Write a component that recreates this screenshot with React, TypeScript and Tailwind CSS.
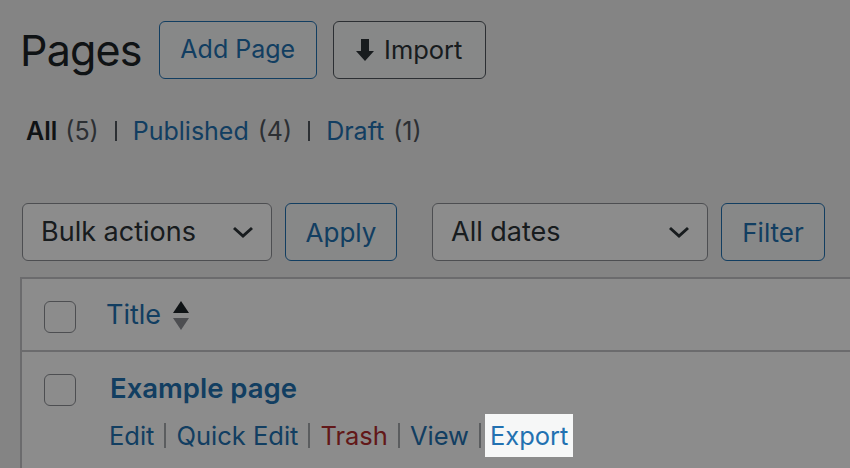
import React from "react";

const font = { fontFamily: "Inter, 'Noto Sans', sans-serif" };

function Chevron() {
  return (
    <svg width="22" height="14" viewBox="0 0 22 14" className="shrink-0">
      <path d="M2 3 L11 11 L20 3" fill="none" stroke="#2c3338" strokeWidth="3" />
    </svg>
  );
}

function Select({ label, width }: { label: string; width: string }) {
  return (
    <div
      className={`${width} h-[58px] flex items-center justify-between pl-[18px] pr-[17px] bg-white border-[1.5px] border-[#8c8f94] rounded-[6px] text-[27px] text-[#2c3338]`}
    >
      <span>{label}</span>
      <Chevron />
    </div>
  );
}

function Checkbox() {
  return <div className="w-[32px] h-[32px] rounded-[6px] border-[1.5px] border-[#8c8f94] bg-white shrink-0" />;
}

// row action divider
const Bar = () => <span className="inline-block w-[2px] h-[25px] bg-[#a7aaad] mx-[10px]" />;
// status filter divider
const FilterBar = () => <span className="inline-block w-[2px] h-[20px] bg-[#50575e] mx-[16px]" />;

export default function App() {
  return (
    <div className="relative w-[850px] h-[468px] overflow-hidden bg-[#f0f0f1]" style={font}>
      {/* page */}
      <div className="pl-[20px] pt-[21px]">
        <div className="flex items-center h-[58px]">
          <h1 className="text-[43px] text-[#1d2327] tracking-[-0.8px] mr-[17px]">Pages</h1>
          <button className="h-[58px] w-[158px] rounded-[6px] border-[1.5px] border-[#2271b1] text-[#2271b1] bg-[#f6f7f7] text-[25px]">
            Add Page
          </button>
          <button className="ml-[16px] h-[58px] w-[153px] rounded-[6px] border-[1.5px] border-[#50575e] text-[#2c3338] bg-[#f6f7f7] text-[25.5px] flex items-center justify-center gap-[10px]">
            <svg width="18" height="22" viewBox="0 0 18 22">
              <path d="M5 0 H13 V12 H18 L9 22 L0 12 H5 Z" fill="#2c3338" />
            </svg>
            Import
          </button>
        </div>

        <div className="mt-[36px] ml-[6px] text-[25px] leading-[32px] flex items-center">
          <span className="font-semibold text-[#1d2327]">All</span>
          <span className="text-[#50575e] ml-[8px]">(5)</span>
          <FilterBar />
          <span className="text-[#2271b1]">Published</span>
          <span className="text-[#50575e] ml-[9px]">(4)</span>
          <FilterBar />
          <span className="text-[#2271b1]">Draft</span>
          <span className="text-[#50575e] ml-[9px]">(1)</span>
        </div>

        <div className="mt-[56px] ml-[2px] flex items-center">
          <Select label="Bulk actions" width="w-[250px]" />
          <button className="ml-[13px] h-[58px] w-[112px] rounded-[6px] border-[1.5px] border-[#2271b1] text-[#2271b1] bg-[#f6f7f7] text-[26px]">
            Apply
          </button>
          <div className="ml-[35px]">
            <Select label="All dates" width="w-[276px]" />
          </div>
          <button className="ml-[13px] h-[58px] w-[104px] rounded-[6px] border-[1.5px] border-[#2271b1] text-[#2271b1] bg-[#f6f7f7] text-[26px]">
            Filter
          </button>
        </div>

        {/* table */}
        <div className="mt-[16px] w-[900px] bg-white border-l-2 border-t-2 border-[#c3c4c7]">
          <div className="flex h-[73px] border-b-2 border-[#c3c4c7]">
            <div className="pl-[22px] pt-[22px]">
              <Checkbox />
            </div>
            <div className="pl-[30px] pt-[18px] flex items-start">
              <span className="text-[27px] leading-[36px] text-[#2271b1]">Title</span>
              <svg width="16" height="30" viewBox="0 0 16 30" className="ml-[12px] mt-[4px]">
                <path d="M0 12 L8 0 L16 12 Z" fill="#1d2327" />
                <path d="M0 17 L16 17 L8 29 Z" fill="#8c8f94" />
              </svg>
            </div>
          </div>
          <div className="flex pb-[30px]">
            <div className="pl-[22px] pt-[22px]">
              <Checkbox />
            </div>
            <div className="pl-[34px] pt-[18px]">
              <div className="text-[27.5px] leading-[36px] font-semibold text-[#2271b1]">Example page</div>
              <div className="flex items-center text-[25.5px] leading-[32px] mt-[8px] -ml-px">
                <span className="text-[#2271b1]">Edit</span>
                <Bar />
                <span className="text-[#2271b1]">Quick Edit</span>
                <Bar />
                <span className="text-[#b32d2e]">Trash</span>
                <Bar />
                <span className="text-[#2271b1]">View</span>
                <span className="inline-block w-[2px] h-[25px] bg-[#a7aaad] ml-[10px] mr-[4px]" />
                <span className="relative z-20 px-[5px] py-[6px] leading-[31px] bg-[#f6f7f7] text-[#2271b1]">
                  Export
                </span>
              </div>
            </div>
          </div>
        </div>
      </div>

      {/* tour overlay */}
      <div className="absolute inset-0 z-10 bg-black/45" />
    </div>
  );
}
